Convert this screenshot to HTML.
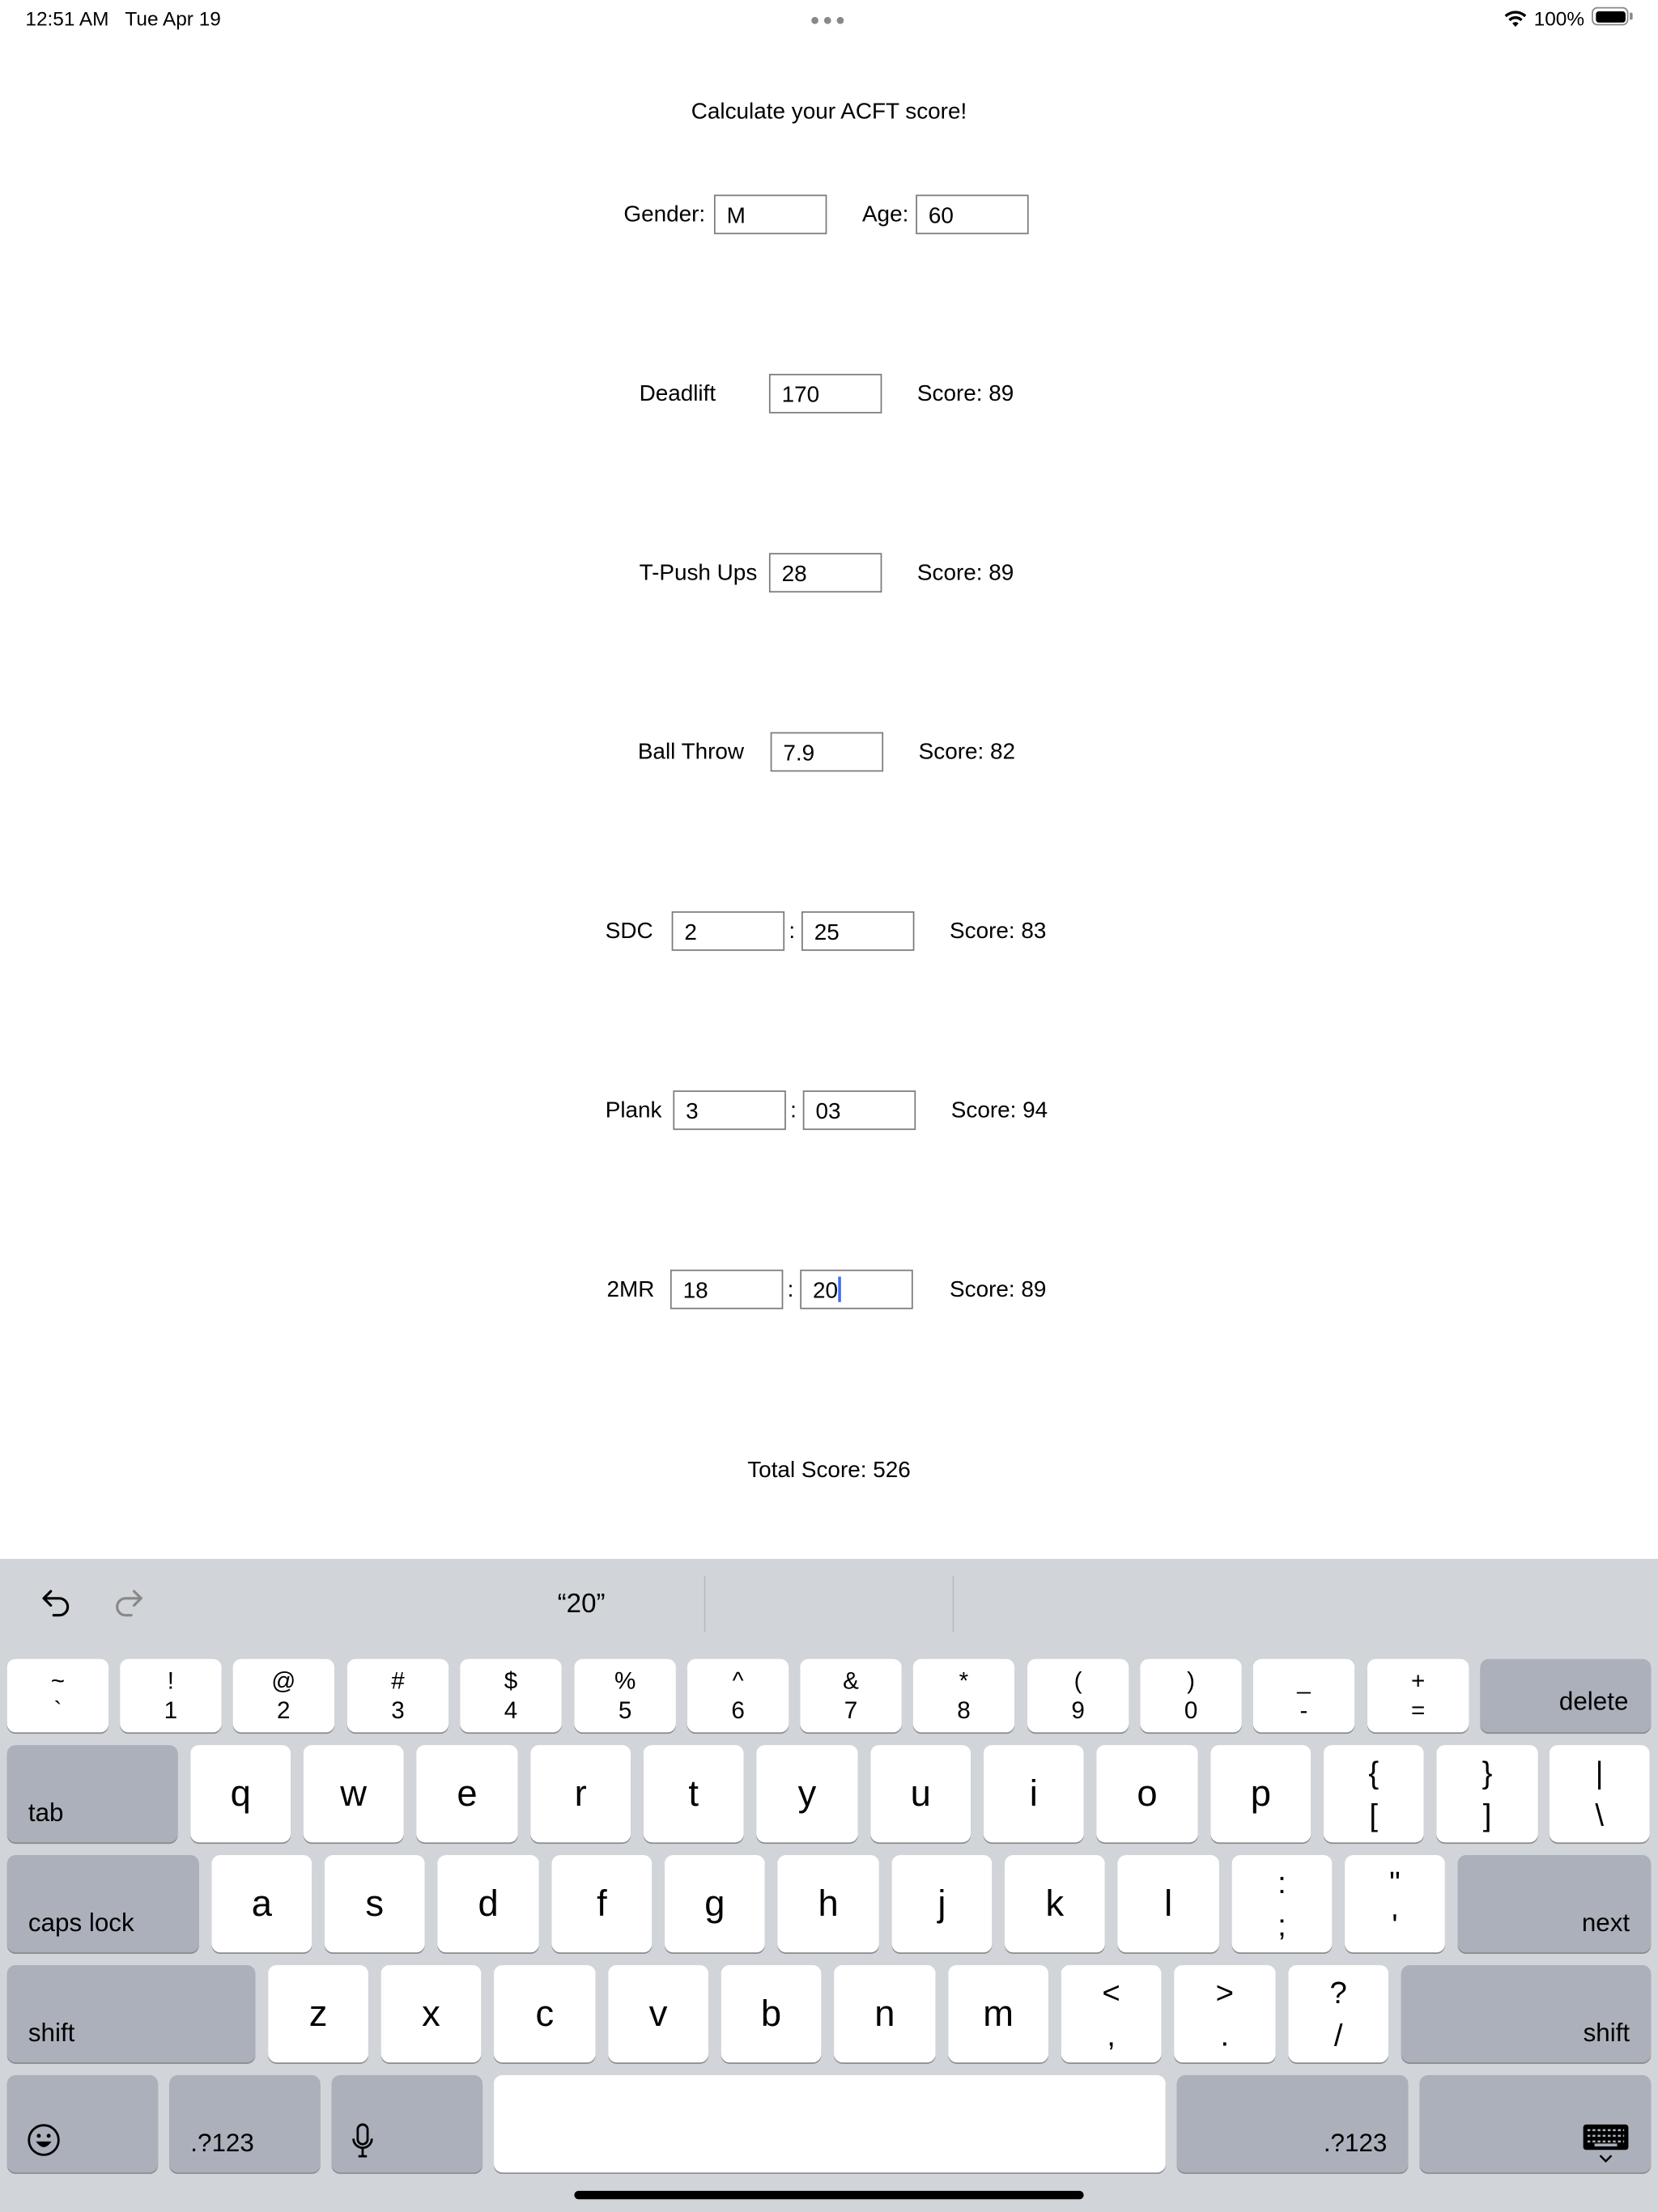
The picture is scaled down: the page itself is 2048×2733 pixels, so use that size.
<!DOCTYPE html>
<html><head><meta charset="utf-8">
<style>
html,body{margin:0;padding:0;background:#fff;width:2048px;height:2732px;overflow:hidden}
#s{position:absolute;left:0;top:0;width:1175px;height:1568px;transform:scale(1.74298);transform-origin:0 0;font-family:"Liberation Sans",sans-serif;color:#000}
.a{position:absolute;white-space:nowrap}
.t{position:absolute;font-size:16px;line-height:20px;white-space:nowrap;margin-top:1px}
.b{position:absolute;width:80px;height:28px;border:1.2px solid #7b7b7b;box-sizing:border-box;font-size:16px;line-height:30px;padding-left:8px}
#kb{position:absolute;left:0;top:1105px;width:1175px;height:463px;background:#d1d4d9}
.k{position:absolute;background:#fff;border-radius:6px;box-shadow:0 1px 0 #898a8d;display:flex;align-items:center;justify-content:center;font-size:26px;text-align:center}
.g{background:#abb0ba;font-size:18px}
.d{font-size:17px;line-height:21px}
.p{font-size:22px;line-height:30px}
.gl{position:absolute;left:15px;bottom:10px}
.gr{position:absolute;right:15px;bottom:10px}
</style></head><body><div id="s">
<div class="a" style="left:18px;top:5px;font-size:14px">12:51 AM&nbsp;&nbsp; Tue Apr 19</div>
<div class="a" style="left:575px;top:12px;width:26px;height:5px">
<span style="position:absolute;left:0;width:5px;height:5px;border-radius:3px;background:#888"></span>
<span style="position:absolute;left:9px;width:5px;height:5px;border-radius:3px;background:#888"></span>
<span style="position:absolute;left:18px;width:5px;height:5px;border-radius:3px;background:#888"></span></div>
<svg class="a" style="left:1066px;top:7px" width="16" height="13" viewBox="0 0 16 13"><path d="M1 4.5 A10 10 0 0 1 15 4.5" stroke="#000" stroke-width="2" fill="none"/><path d="M3.7 7.3 A6 6 0 0 1 12.3 7.3" stroke="#000" stroke-width="2" fill="none"/><path d="M5.8 9.6 L8 12 L10.2 9.6 A3 3 0 0 0 5.8 9.6Z" fill="#000"/></svg>
<div class="a" style="left:1087px;top:5px;font-size:14px">100%</div>
<div class="a" style="left:1128px;top:5px;width:26px;height:13px;border:1.2px solid #888;border-radius:4px;box-sizing:border-box"><div style="position:absolute;left:1.5px;top:1.5px;right:1.5px;bottom:1.5px;background:#000;border-radius:2px"></div></div>
<div class="a" style="left:1155px;top:9px;width:2px;height:5px;background:#888;border-radius:0 1px 1px 0"></div>

<div class="t" style="left:0;width:1175px;text-align:center;top:69px">Calculate your ACFT score!</div>
<div class="t" style="left:442px;top:142px">Gender:</div><div class="b" style="left:506px;top:138px">M</div>
<div class="t" style="left:611px;top:142px">Age:</div><div class="b" style="left:649px;top:138px">60</div>

<div class="t" style="left:453px;top:269px">Deadlift</div><div class="b" style="left:545px;top:265px">170</div><div class="t" style="left:650px;top:269px">Score: 89</div>
<div class="t" style="left:453px;top:396px">T-Push Ups</div><div class="b" style="left:545px;top:392px">28</div><div class="t" style="left:650px;top:396px">Score: 89</div>
<div class="t" style="left:452px;top:523px">Ball Throw</div><div class="b" style="left:546px;top:519px">7.9</div><div class="t" style="left:651px;top:523px">Score: 82</div>

<div class="t" style="left:429px;top:650px">SDC</div><div class="b" style="left:476px;top:646px">2</div><div class="t" style="left:559px;top:650px">:</div><div class="b" style="left:568px;top:646px">25</div><div class="t" style="left:673px;top:650px">Score: 83</div>
<div class="t" style="left:429px;top:777px">Plank</div><div class="b" style="left:477px;top:773px">3</div><div class="t" style="left:560px;top:777px">:</div><div class="b" style="left:569px;top:773px">03</div><div class="t" style="left:674px;top:777px">Score: 94</div>
<div class="t" style="left:430px;top:904px">2MR</div><div class="b" style="left:475px;top:900px">18</div><div class="t" style="left:558px;top:904px">:</div><div class="b" style="left:567px;top:900px">20<span style="display:inline-block;width:2px;height:18px;background:#3a6cf5;vertical-align:-3px"></span></div><div class="t" style="left:673px;top:904px">Score: 89</div>
<div class="t" style="left:0;width:1175px;text-align:center;top:1032px">Total Score: 526</div>

<div id="kb">
<svg class="a" style="left:28px;top:20px" width="24" height="24" viewBox="0 0 24 24"><path d="M8 3 L3 8 L8 13 M3 8 H14 A6 6 0 0 1 14 20 H10" stroke="#000" stroke-width="1.8" fill="none" stroke-linecap="round" stroke-linejoin="round"/></svg>
<svg class="a" style="left:79px;top:20px" width="24" height="24" viewBox="0 0 24 24"><path d="M16 3 L21 8 L16 13 M21 8 H10 A6 6 0 0 0 10 20 H14" stroke="#888" stroke-width="1.8" fill="none" stroke-linecap="round" stroke-linejoin="round"/></svg>
<div class="a" style="left:362px;top:22px;width:100px;text-align:center;font-size:19px">“20”</div>
<div class="a" style="left:499px;top:12px;width:1px;height:40px;background:#b9bcc1"></div>
<div class="a" style="left:675px;top:12px;width:1px;height:40px;background:#b9bcc1"></div>
</div>

<div class="k d" style="left:5px;top:1176px;width:72px;height:52px">~<br>`</div>
<div class="k d" style="left:85px;top:1176px;width:72px;height:52px">!<br>1</div>
<div class="k d" style="left:165px;top:1176px;width:72px;height:52px">@<br>2</div>
<div class="k d" style="left:246px;top:1176px;width:72px;height:52px">#<br>3</div>
<div class="k d" style="left:326px;top:1176px;width:72px;height:52px">$<br>4</div>
<div class="k d" style="left:407px;top:1176px;width:72px;height:52px">%<br>5</div>
<div class="k d" style="left:487px;top:1176px;width:72px;height:52px">^<br>6</div>
<div class="k d" style="left:567px;top:1176px;width:72px;height:52px">&amp;<br>7</div>
<div class="k d" style="left:647px;top:1176px;width:72px;height:52px">*<br>8</div>
<div class="k d" style="left:728px;top:1176px;width:72px;height:52px">(<br>9</div>
<div class="k d" style="left:808px;top:1176px;width:72px;height:52px">)<br>0</div>
<div class="k d" style="left:888px;top:1176px;width:72px;height:52px">_<br>-</div>
<div class="k d" style="left:969px;top:1176px;width:72px;height:52px">+<br>=</div>
<div class="k g" style="left:1049px;top:1176px;width:121px;height:52px"><span class="gr" style="bottom:11px;right:16px">delete</span></div>

<div class="k g" style="left:5px;top:1237px;width:121px;height:69px"><span class="gl">tab</span></div>
<div class="k" style="left:135px;top:1237px;width:71px;height:69px">q</div>
<div class="k" style="left:215px;top:1237px;width:71px;height:69px">w</div>
<div class="k" style="left:295px;top:1237px;width:72px;height:69px">e</div>
<div class="k" style="left:376px;top:1237px;width:71px;height:69px">r</div>
<div class="k" style="left:456px;top:1237px;width:71px;height:69px">t</div>
<div class="k" style="left:536px;top:1237px;width:72px;height:69px">y</div>
<div class="k" style="left:617px;top:1237px;width:71px;height:69px">u</div>
<div class="k" style="left:697px;top:1237px;width:71px;height:69px">i</div>
<div class="k" style="left:777px;top:1237px;width:72px;height:69px">o</div>
<div class="k" style="left:858px;top:1237px;width:71px;height:69px">p</div>
<div class="k p" style="left:938px;top:1237px;width:71px;height:69px">{<br>[</div>
<div class="k p" style="left:1018px;top:1237px;width:72px;height:69px">}<br>]</div>
<div class="k p" style="left:1098px;top:1237px;width:71px;height:69px">|<br>\</div>

<div class="k g" style="left:5px;top:1315px;width:136px;height:69px"><span class="gl">caps lock</span></div>
<div class="k" style="left:150px;top:1315px;width:71px;height:69px">a</div>
<div class="k" style="left:230px;top:1315px;width:71px;height:69px">s</div>
<div class="k" style="left:310px;top:1315px;width:72px;height:69px">d</div>
<div class="k" style="left:391px;top:1315px;width:71px;height:69px">f</div>
<div class="k" style="left:471px;top:1315px;width:71px;height:69px">g</div>
<div class="k" style="left:551px;top:1315px;width:72px;height:69px">h</div>
<div class="k" style="left:632px;top:1315px;width:71px;height:69px">j</div>
<div class="k" style="left:712px;top:1315px;width:71px;height:69px">k</div>
<div class="k" style="left:792px;top:1315px;width:72px;height:69px">l</div>
<div class="k p" style="left:873px;top:1315px;width:71px;height:69px">:<br>;</div>
<div class="k p" style="left:953px;top:1315px;width:71px;height:69px">"<br>'</div>
<div class="k g" style="left:1033px;top:1315px;width:137px;height:69px"><span class="gr">next</span></div>

<div class="k g" style="left:5px;top:1393px;width:176px;height:69px"><span class="gl">shift</span></div>
<div class="k" style="left:190px;top:1393px;width:71px;height:69px">z</div>
<div class="k" style="left:270px;top:1393px;width:71px;height:69px">x</div>
<div class="k" style="left:350px;top:1393px;width:72px;height:69px">c</div>
<div class="k" style="left:431px;top:1393px;width:71px;height:69px">v</div>
<div class="k" style="left:511px;top:1393px;width:71px;height:69px">b</div>
<div class="k" style="left:591px;top:1393px;width:72px;height:69px">n</div>
<div class="k" style="left:672px;top:1393px;width:71px;height:69px">m</div>
<div class="k p" style="left:752px;top:1393px;width:71px;height:69px">&lt;<br>,</div>
<div class="k p" style="left:832px;top:1393px;width:72px;height:69px">&gt;<br>.</div>
<div class="k p" style="left:913px;top:1393px;width:71px;height:69px">?<br>/</div>
<div class="k g" style="left:993px;top:1393px;width:177px;height:69px"><span class="gr">shift</span></div>

<div class="k g" style="left:5px;top:1471px;width:107px;height:69px"><svg class="a" style="left:14px;top:34px" width="24" height="24" viewBox="0 0 24 24"><circle cx="12" cy="12" r="10.5" stroke="#000" stroke-width="1.6" fill="none"/><circle cx="8.5" cy="9" r="1.4"/><circle cx="15.5" cy="9" r="1.4"/><path d="M6.5 13 Q12 21 17.5 13 Z" fill="#000"/></svg></div>
<div class="k g" style="left:120px;top:1471px;width:107px;height:69px"><span class="gl">.?123</span></div>
<div class="k g" style="left:235px;top:1471px;width:107px;height:69px"><svg class="a" style="left:14px;top:34px" width="16" height="26" viewBox="0 0 16 26"><rect x="4.5" y="1" width="7" height="14" rx="3.5" stroke="#000" stroke-width="1.6" fill="none"/><path d="M1.5 11 A6.5 6.5 0 0 0 14.5 11 M8 18 V23 M5 23.5 H11" stroke="#000" stroke-width="1.6" fill="none"/></svg></div>
<div class="k" style="left:350px;top:1471px;width:476px;height:69px"></div>
<div class="k g" style="left:834px;top:1471px;width:164px;height:69px"><span class="gr">.?123</span></div>
<div class="k g" style="left:1006px;top:1471px;width:164px;height:69px"><svg class="a" style="right:15px;top:34px" width="34" height="30" viewBox="0 0 34 30"><rect x="1" y="1" width="32" height="18" rx="2" fill="#000"/><g stroke="#abb0ba" stroke-width="1.4"><path d="M4 5H30M4 9H30M4 13H30" stroke-dasharray="2 1.6"/></g><rect x="9" y="14.5" width="16" height="2" fill="#abb0ba"/><path d="M13 23 L17 27 L21 23" stroke="#000" stroke-width="1.4" fill="none"/></svg></div>
<div class="a" style="left:407px;top:1553px;width:361px;height:6px;border-radius:3px;background:#000"></div>
</div></body></html>
